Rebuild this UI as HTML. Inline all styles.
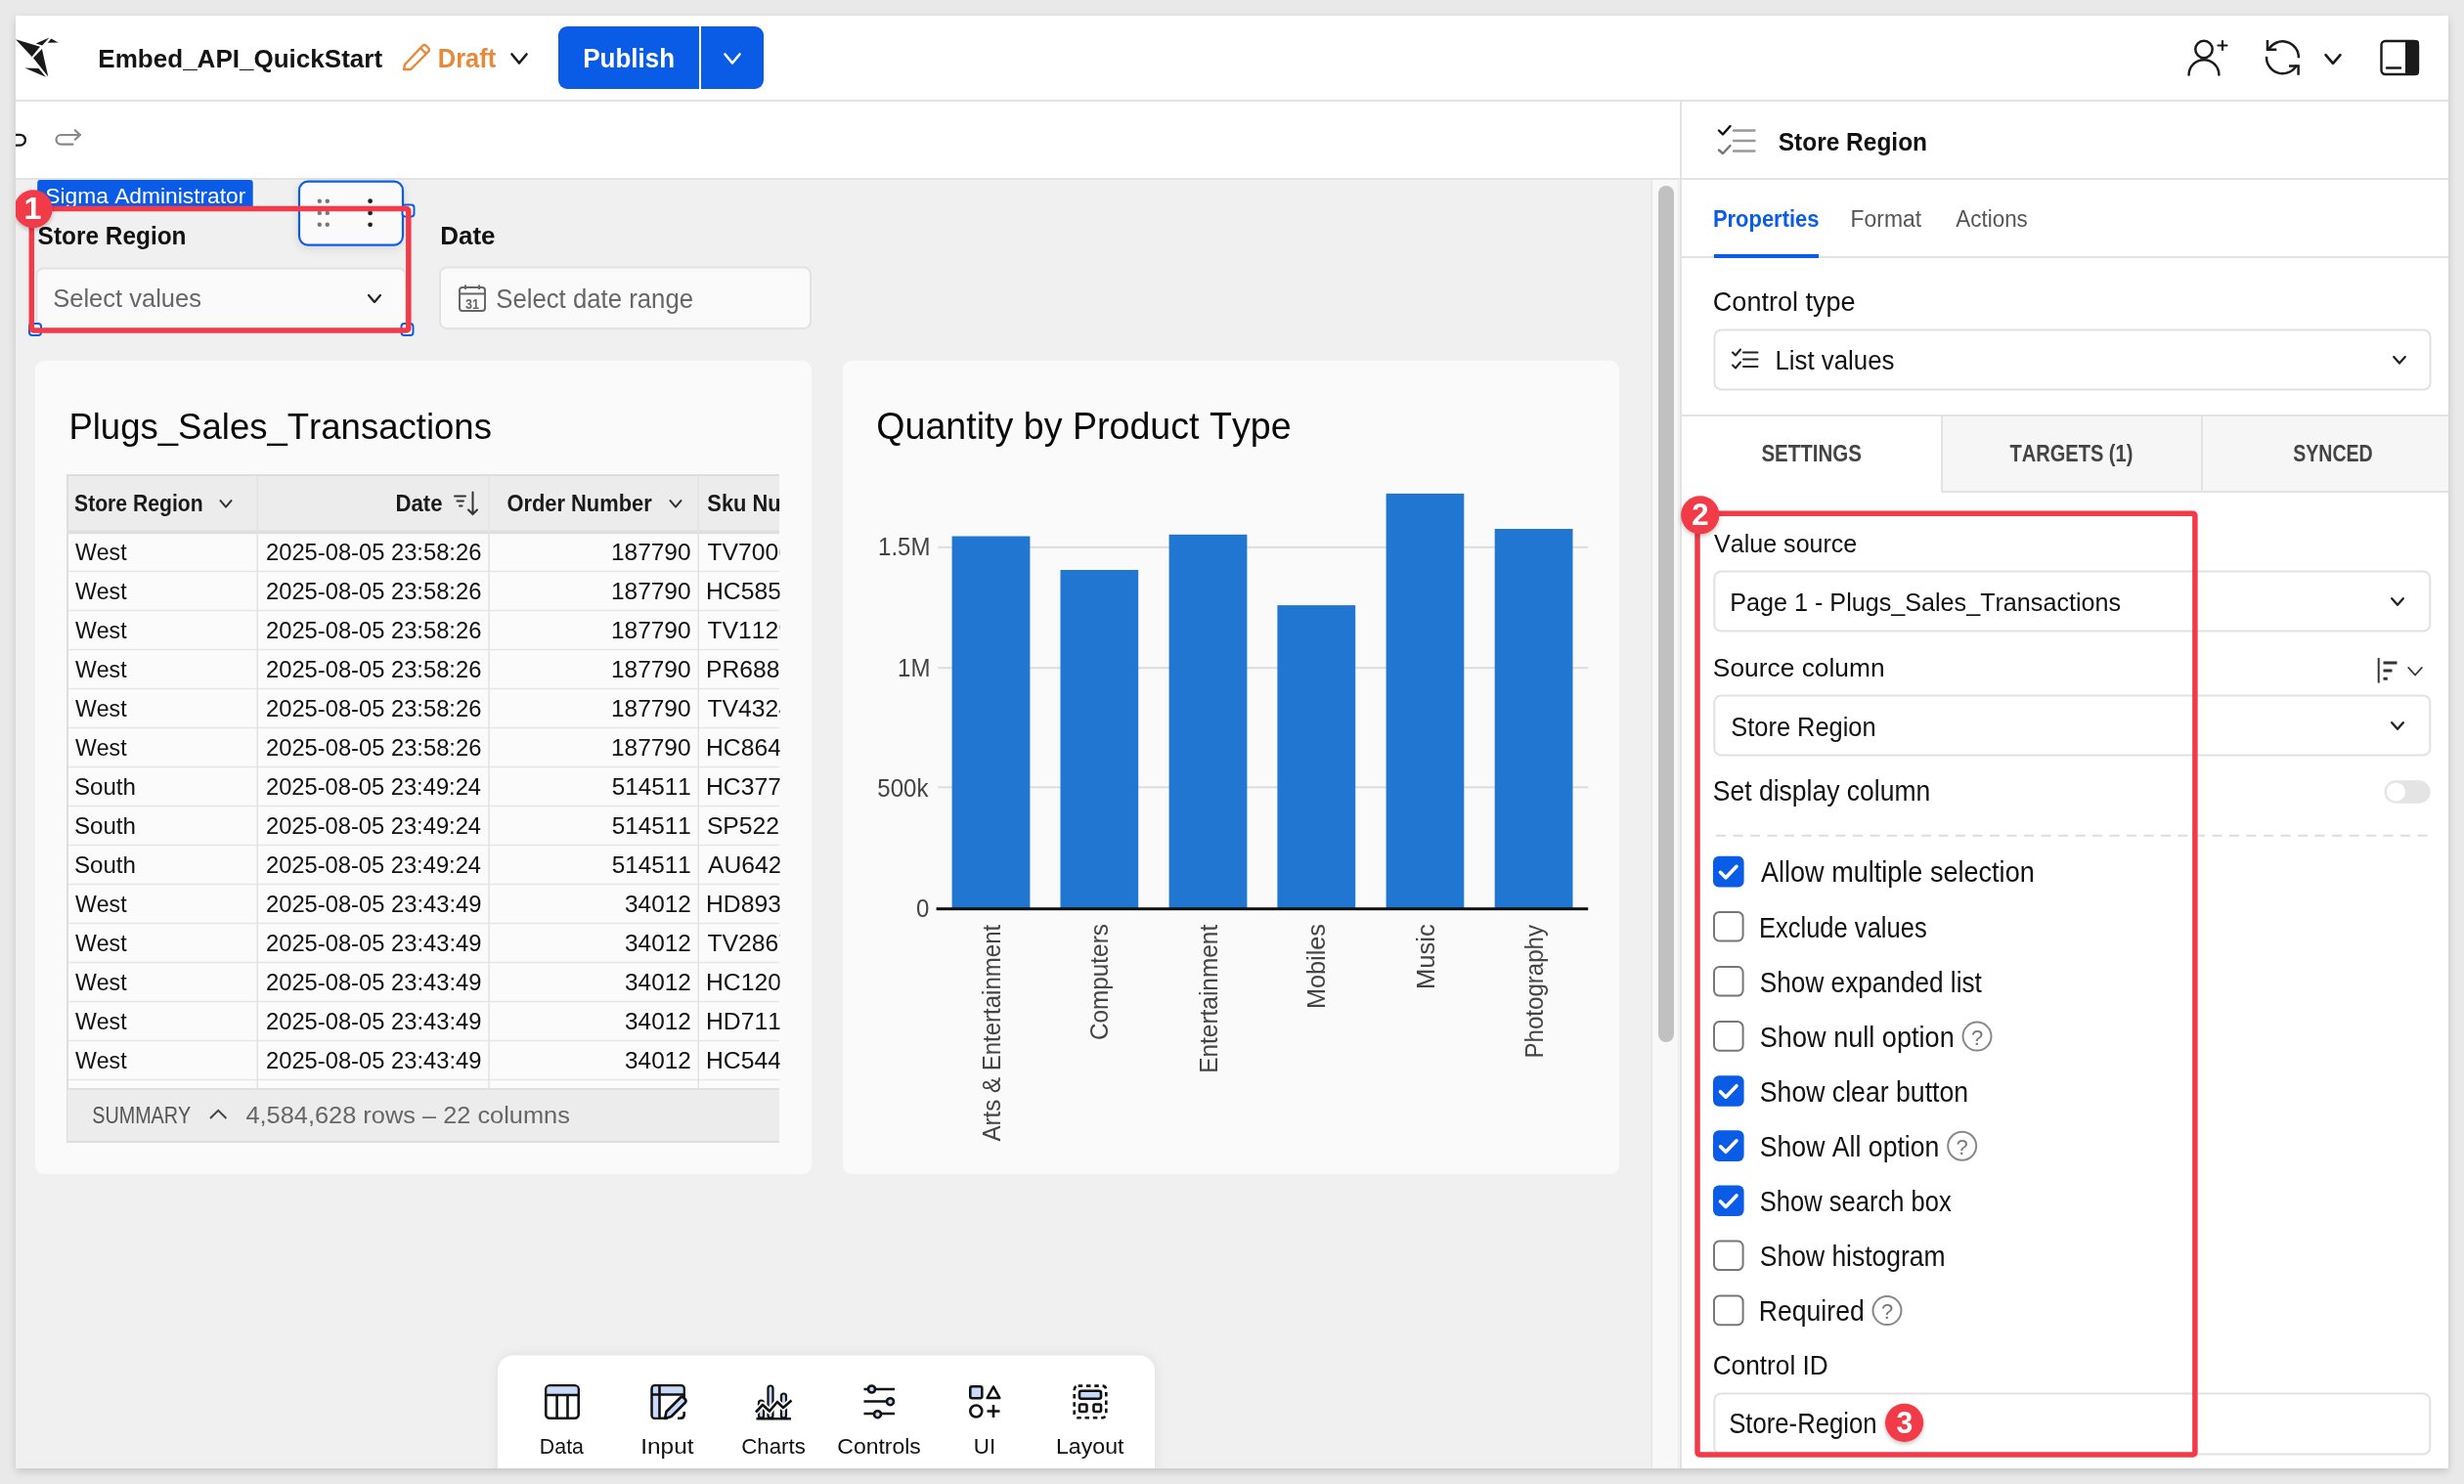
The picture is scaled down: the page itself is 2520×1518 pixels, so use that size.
<!DOCTYPE html><html><head><meta charset="utf-8"><style>html,body{margin:0;padding:0;background:#e9e9e9;overflow:hidden}</style></head><body><svg width="2520" height="1518" viewBox="0 0 2520 1518" style="display:block;font-family:'Liberation Sans',sans-serif;font-kerning:none;will-change:transform">
<defs>
<filter id="appsh" x="-5%" y="-5%" width="110%" height="110%"><feDropShadow dx="0" dy="3" stdDeviation="4" flood-color="#000" flood-opacity="0.16"/></filter>
<filter id="sh2" x="-20%" y="-20%" width="140%" height="160%"><feDropShadow dx="0" dy="3" stdDeviation="5" flood-color="#000" flood-opacity="0.10"/></filter>
<filter id="sh3" x="-10%" y="-30%" width="120%" height="160%"><feDropShadow dx="0" dy="0" stdDeviation="6" flood-color="#000" flood-opacity="0.08"/></filter>
<filter id="bsh" x="-30%" y="-30%" width="160%" height="160%"><feDropShadow dx="0" dy="2" stdDeviation="2" flood-color="#000" flood-opacity="0.25"/></filter>
<clipPath id="tblclip"><rect x="68" y="485" width="729" height="700"/></clipPath>
<clipPath id="appclip"><rect x="16" y="16" width="2488" height="1486"/></clipPath>
</defs>
<rect x="0" y="0" width="2520" height="1518" fill="#e9e9e9" />
<rect x="16" y="16" width="2488" height="1486" fill="#ffffff" filter="url(#appsh)"/>
<g clip-path="url(#appclip)">
<rect x="16" y="102" width="2488" height="2" fill="#e3e3e3" />
<rect x="16" y="182" width="2488" height="2" fill="#e3e3e3" />
<rect x="16" y="184" width="1674" height="1318" fill="#f0f0f0" />
<rect x="1690" y="184" width="28" height="1318" fill="#f8f8f8" />
<rect x="1696" y="190" width="16" height="876" fill="#c1c1c1" rx="8" />
<rect x="1718" y="104" width="2" height="1398" fill="#e3e3e3" />
<rect x="1716" y="184" width="1.5" height="1318" fill="#ececec" />
<rect x="1688.5" y="184" width="1.5" height="1318" fill="#e6e6e6" />
<g fill="#1a1a1a"><polygon points="16,40.2 41,47.7 32.6,58"/><polygon points="36.7,44.5 50.4,38.5 43.1,46.4"/><polygon points="48.8,43.7 52.3,39.6 59.6,43.4"/><polygon points="34,59.3 42.9,49.9 49.3,78.4"/><polygon points="25.3,69.5 39.6,70.1 46.9,78.7"/></g>
<text x="100.36" y="68.80" font-size="25.87" font-weight="bold" fill="#141414" textLength="290.76" lengthAdjust="spacingAndGlyphs" >Embed_API_QuickStart</text>
<g fill="none" stroke="#e8883a" stroke-width="2.4" stroke-linejoin="round"><path d="M414 66 L432 47 Q434 45 436 47 L438 49 Q440 51 438 53 L420 71 L413 71 Z"/><path d="M430 49 L436 55"/></g>
<text x="447.79" y="69.00" font-size="27.62" font-weight="bold" fill="#e8883a" textLength="59.52" lengthAdjust="spacingAndGlyphs" >Draft</text>
<path d="M523.5 55.5 L531.0 64.5 L538.5 55.5" fill="none" stroke="#1a1a1a" stroke-width="2.6" stroke-linecap="round" stroke-linejoin="round"/>
<rect x="571" y="27" width="210" height="64" fill="#0a5ce6" rx="9" />
<rect x="715" y="27" width="2" height="64" fill="#ffffff" />
<text x="596.26" y="69.00" font-size="27.62" font-weight="bold" fill="#ffffff" textLength="93.85" lengthAdjust="spacingAndGlyphs" >Publish</text>
<path d="M741.5 55.5 L749.0 64.5 L756.5 55.5" fill="none" stroke="#ffffff" stroke-width="2.6" stroke-linecap="round" stroke-linejoin="round"/>
<g fill="none" stroke="#1a1a1a" stroke-width="2.5" stroke-linecap="round"><circle cx="2254" cy="50.5" r="8.7"/><path d="M2238.6 76.5 A15.4 15.4 0 0 1 2269.4 76.5"/><path d="M2273 42 V51 M2268.5 46.5 H2277.5" stroke-width="2.2"/></g>
<g fill="none" stroke="#1a1a1a" stroke-width="2.5"><path d="M2350.90 59.30 A16.4 16.4 0 0 0 2320.02 51.10"/><path d="M2318.10 57.80 A16.4 16.4 0 0 0 2348.98 66.50"/><path d="M2319 41 V50.7 H2328.3 M2341 67.4 H2350.6 V76.7" stroke-linecap="butt"/></g>
<path d="M2378.5 56.2 L2386.0 64.8 L2393.5 56.2" fill="none" stroke="#1a1a1a" stroke-width="2.6" stroke-linecap="round" stroke-linejoin="round"/>
<rect x="2435.5" y="42" width="37.5" height="34" rx="4" fill="none" stroke="#1a1a1a" stroke-width="2.4"/><rect x="2460" y="41" width="14" height="36" rx="3" fill="#1a1a1a"/><path d="M2441 69.5 H2455" stroke="#1a1a1a" stroke-width="2.4" stroke-linecap="round"/>
<path d="M15 137.8 H20.5 A5.4 5.4 0 0 1 20.5 148.6 H15" fill="none" stroke="#1a1a1a" stroke-width="2.3"/>
<g fill="none" stroke="#888" stroke-width="2.2" stroke-linecap="round" stroke-linejoin="round"><path d="M82 138 H62.3 A4.8 4.8 0 0 0 62.3 147.6 H74.5"/><path d="M76.8 133.2 L81.8 138 L76.8 142.8"/></g>
<rect x="37.5" y="274.5" width="377.5" height="62" fill="#fafafa" rx="7" stroke="#e2e2e2" stroke-width="2" />
<text x="38.60" y="249.50" font-size="26.16" font-weight="bold" fill="#111" textLength="151.92" lengthAdjust="spacingAndGlyphs" >Store Region</text>
<text x="54.24" y="313.90" font-size="26.16" font-weight="normal" fill="#666" textLength="151.68" lengthAdjust="spacingAndGlyphs" >Select values</text>
<path d="M377.0 302.0 L383.0 309.0 L389.0 302.0" fill="none" stroke="#222" stroke-width="2.2" stroke-linecap="round" stroke-linejoin="round"/>
<rect x="450" y="273.6" width="379" height="62.5" fill="#fafafa" rx="7" stroke="#e2e2e2" stroke-width="2" />
<text x="450.26" y="250.00" font-size="26.16" font-weight="bold" fill="#111" textLength="56.33" lengthAdjust="spacingAndGlyphs" >Date</text>
<g fill="none" stroke="#666" stroke-width="2"><rect x="470" y="294" width="26" height="24" rx="3"/><path d="M470 300.5 H496 M476 291.5 V296 M490 291.5 V296"/></g>
<text x="476" y="316" font-size="14" font-weight="bold" fill="#666" textLength="14" lengthAdjust="spacingAndGlyphs">31</text>
<text x="507.23" y="314.80" font-size="26.89" font-weight="normal" fill="#666" textLength="201.81" lengthAdjust="spacingAndGlyphs" >Select date range</text>
<rect x="36" y="369" width="794" height="832" fill="#fafafa" rx="9" />
<text x="70.40" y="448.80" font-size="37.79" font-weight="normal" fill="#0a0a0a" textLength="432.52" lengthAdjust="spacingAndGlyphs" >Plugs_Sales_Transactions</text>
<g clip-path="url(#tblclip)">
<rect x="69" y="486" width="728" height="57" fill="#ececec" />
<rect x="69" y="542.5" width="728" height="4" fill="#dedede" />
<rect x="69" y="546.5" width="728" height="567" fill="#fbfbfb" />
<rect x="69" y="583.75" width="728" height="1.5" fill="#e6e6e6" />
<rect x="69" y="623.75" width="728" height="1.5" fill="#e6e6e6" />
<rect x="69" y="663.75" width="728" height="1.5" fill="#e6e6e6" />
<rect x="69" y="703.75" width="728" height="1.5" fill="#e6e6e6" />
<rect x="69" y="743.75" width="728" height="1.5" fill="#e6e6e6" />
<rect x="69" y="783.75" width="728" height="1.5" fill="#e6e6e6" />
<rect x="69" y="823.75" width="728" height="1.5" fill="#e6e6e6" />
<rect x="69" y="863.75" width="728" height="1.5" fill="#e6e6e6" />
<rect x="69" y="903.75" width="728" height="1.5" fill="#e6e6e6" />
<rect x="69" y="943.75" width="728" height="1.5" fill="#e6e6e6" />
<rect x="69" y="983.75" width="728" height="1.5" fill="#e6e6e6" />
<rect x="69" y="1023.75" width="728" height="1.5" fill="#e6e6e6" />
<rect x="69" y="1063.75" width="728" height="1.5" fill="#e6e6e6" />
<rect x="69" y="1103.75" width="728" height="1.5" fill="#e6e6e6" />
<rect x="262.45" y="486" width="1.5" height="628" fill="#e2e2e2" />
<rect x="499.25" y="486" width="1.5" height="628" fill="#e2e2e2" />
<rect x="713.55" y="486" width="1.5" height="628" fill="#e2e2e2" />
</g>
<rect x="68" y="485" width="729" height="2" fill="#dedede" />
<rect x="68" y="485" width="2" height="684" fill="#dedede" />
<rect x="69" y="1113" width="728" height="55" fill="#ececec" />
<rect x="68" y="1167" width="729" height="2" fill="#dedede" />
<rect x="69" y="1113" width="728" height="2" fill="#e0e0e0" />
<text x="76.09" y="522.80" font-size="23.26" font-weight="bold" fill="#1a1a1a" textLength="131.52" lengthAdjust="spacingAndGlyphs" >Store Region</text>
<path d="M225.5 512.1 L231.0 518.6 L236.5 512.1" fill="none" stroke="#333" stroke-width="2" stroke-linecap="round" stroke-linejoin="round"/>
<text x="404.52" y="522.80" font-size="23.26" font-weight="bold" fill="#1a1a1a" textLength="48.04" lengthAdjust="spacingAndGlyphs" >Date</text>
<g fill="none" stroke="#333" stroke-width="2" stroke-linecap="round"><path d="M465 507.5 H476 M467.5 512.5 H474 M470 517.5 H472.5"/><path d="M483.5 503.5 V526 M479 521.5 L483.5 526 L488 521.5"/></g>
<text x="518.40" y="523.00" font-size="23.26" font-weight="bold" fill="#1a1a1a" textLength="148.33" lengthAdjust="spacingAndGlyphs" >Order Number</text>
<path d="M685.5 512.1 L691.0 518.6 L696.5 512.1" fill="none" stroke="#333" stroke-width="2" stroke-linecap="round" stroke-linejoin="round"/>
<svg x="700" y="486" width="97.6" height="60" overflow="hidden">
<g transform="translate(-700,-486)">
<text x="723.37" y="523.00" font-size="23.26" font-weight="bold" fill="#1a1a1a" textLength="128.87" lengthAdjust="spacingAndGlyphs">Sku Number</text>
</g></svg>
<svg x="700" y="546" width="97.6" height="566" overflow="hidden"><g transform="translate(-700,-546)">
<text x="723.45" y="572.70" font-size="24.71" font-weight="normal" fill="#111" textLength="86.54" lengthAdjust="spacingAndGlyphs" transform="translate(0,0)">TV7006</text>
<text x="721.97" y="612.70" font-size="24.71" font-weight="normal" fill="#111" textLength="90.66" lengthAdjust="spacingAndGlyphs" transform="translate(0,0)">HC5855</text>
<text x="723.45" y="652.70" font-size="24.71" font-weight="normal" fill="#111" textLength="86.54" lengthAdjust="spacingAndGlyphs" transform="translate(0,0)">TV1129</text>
<text x="721.97" y="692.70" font-size="24.71" font-weight="normal" fill="#111" textLength="89.29" lengthAdjust="spacingAndGlyphs" transform="translate(0,0)">PR6885</text>
<text x="723.45" y="732.70" font-size="24.71" font-weight="normal" fill="#111" textLength="86.54" lengthAdjust="spacingAndGlyphs" transform="translate(0,0)">TV4324</text>
<text x="721.97" y="772.70" font-size="24.71" font-weight="normal" fill="#111" textLength="90.66" lengthAdjust="spacingAndGlyphs" transform="translate(0,0)">HC8644</text>
<text x="721.97" y="812.70" font-size="24.71" font-weight="normal" fill="#111" textLength="90.66" lengthAdjust="spacingAndGlyphs" transform="translate(0,0)">HC3777</text>
<text x="722.88" y="852.70" font-size="24.71" font-weight="normal" fill="#111" textLength="87.93" lengthAdjust="spacingAndGlyphs" transform="translate(0,0)">SP5221</text>
<text x="723.95" y="892.70" font-size="24.71" font-weight="normal" fill="#111" textLength="89.29" lengthAdjust="spacingAndGlyphs" transform="translate(0,0)">AU6427</text>
<text x="721.97" y="932.70" font-size="24.71" font-weight="normal" fill="#111" textLength="90.66" lengthAdjust="spacingAndGlyphs" transform="translate(0,0)">HD8931</text>
<text x="723.45" y="972.70" font-size="24.71" font-weight="normal" fill="#111" textLength="86.54" lengthAdjust="spacingAndGlyphs" transform="translate(0,0)">TV2867</text>
<text x="721.97" y="1012.70" font-size="24.71" font-weight="normal" fill="#111" textLength="90.66" lengthAdjust="spacingAndGlyphs" transform="translate(0,0)">HC1201</text>
<text x="721.97" y="1052.70" font-size="24.71" font-weight="normal" fill="#111" textLength="90.66" lengthAdjust="spacingAndGlyphs" transform="translate(0,0)">HD7111</text>
<text x="721.97" y="1092.70" font-size="24.71" font-weight="normal" fill="#111" textLength="90.66" lengthAdjust="spacingAndGlyphs" transform="translate(0,0)">HC5444</text>
</g></svg>
<text x="76.90" y="572.70" font-size="24.71" font-weight="normal" fill="#111" textLength="52.67" lengthAdjust="spacingAndGlyphs" >West</text>
<text x="272.01" y="572.70" font-size="24.71" font-weight="normal" fill="#111" textLength="220.34" lengthAdjust="spacingAndGlyphs" >2025-08-05 23:58:26</text>
<text x="624.94" y="572.70" font-size="24.71" font-weight="normal" fill="#111" textLength="81.62" lengthAdjust="spacingAndGlyphs" >187790</text>
<text x="76.90" y="612.70" font-size="24.71" font-weight="normal" fill="#111" textLength="52.67" lengthAdjust="spacingAndGlyphs" >West</text>
<text x="272.01" y="612.70" font-size="24.71" font-weight="normal" fill="#111" textLength="220.34" lengthAdjust="spacingAndGlyphs" >2025-08-05 23:58:26</text>
<text x="624.94" y="612.70" font-size="24.71" font-weight="normal" fill="#111" textLength="81.62" lengthAdjust="spacingAndGlyphs" >187790</text>
<text x="76.90" y="652.70" font-size="24.71" font-weight="normal" fill="#111" textLength="52.67" lengthAdjust="spacingAndGlyphs" >West</text>
<text x="272.01" y="652.70" font-size="24.71" font-weight="normal" fill="#111" textLength="220.34" lengthAdjust="spacingAndGlyphs" >2025-08-05 23:58:26</text>
<text x="624.94" y="652.70" font-size="24.71" font-weight="normal" fill="#111" textLength="81.62" lengthAdjust="spacingAndGlyphs" >187790</text>
<text x="76.90" y="692.70" font-size="24.71" font-weight="normal" fill="#111" textLength="52.67" lengthAdjust="spacingAndGlyphs" >West</text>
<text x="272.01" y="692.70" font-size="24.71" font-weight="normal" fill="#111" textLength="220.34" lengthAdjust="spacingAndGlyphs" >2025-08-05 23:58:26</text>
<text x="624.94" y="692.70" font-size="24.71" font-weight="normal" fill="#111" textLength="81.62" lengthAdjust="spacingAndGlyphs" >187790</text>
<text x="76.90" y="732.70" font-size="24.71" font-weight="normal" fill="#111" textLength="52.67" lengthAdjust="spacingAndGlyphs" >West</text>
<text x="272.01" y="732.70" font-size="24.71" font-weight="normal" fill="#111" textLength="220.34" lengthAdjust="spacingAndGlyphs" >2025-08-05 23:58:26</text>
<text x="624.94" y="732.70" font-size="24.71" font-weight="normal" fill="#111" textLength="81.62" lengthAdjust="spacingAndGlyphs" >187790</text>
<text x="76.90" y="772.70" font-size="24.71" font-weight="normal" fill="#111" textLength="52.67" lengthAdjust="spacingAndGlyphs" >West</text>
<text x="272.01" y="772.70" font-size="24.71" font-weight="normal" fill="#111" textLength="220.34" lengthAdjust="spacingAndGlyphs" >2025-08-05 23:58:26</text>
<text x="624.94" y="772.70" font-size="24.71" font-weight="normal" fill="#111" textLength="81.62" lengthAdjust="spacingAndGlyphs" >187790</text>
<text x="75.90" y="812.70" font-size="24.71" font-weight="normal" fill="#111" textLength="63.06" lengthAdjust="spacingAndGlyphs" >South</text>
<text x="272.01" y="812.70" font-size="24.71" font-weight="normal" fill="#111" textLength="219.99" lengthAdjust="spacingAndGlyphs" >2025-08-05 23:49:24</text>
<text x="625.73" y="812.70" font-size="24.71" font-weight="normal" fill="#111" textLength="81.06" lengthAdjust="spacingAndGlyphs" >514511</text>
<text x="75.90" y="852.70" font-size="24.71" font-weight="normal" fill="#111" textLength="63.06" lengthAdjust="spacingAndGlyphs" >South</text>
<text x="272.01" y="852.70" font-size="24.71" font-weight="normal" fill="#111" textLength="219.99" lengthAdjust="spacingAndGlyphs" >2025-08-05 23:49:24</text>
<text x="625.73" y="852.70" font-size="24.71" font-weight="normal" fill="#111" textLength="81.06" lengthAdjust="spacingAndGlyphs" >514511</text>
<text x="75.90" y="892.70" font-size="24.71" font-weight="normal" fill="#111" textLength="63.06" lengthAdjust="spacingAndGlyphs" >South</text>
<text x="272.01" y="892.70" font-size="24.71" font-weight="normal" fill="#111" textLength="219.99" lengthAdjust="spacingAndGlyphs" >2025-08-05 23:49:24</text>
<text x="625.73" y="892.70" font-size="24.71" font-weight="normal" fill="#111" textLength="81.06" lengthAdjust="spacingAndGlyphs" >514511</text>
<text x="76.90" y="932.70" font-size="24.71" font-weight="normal" fill="#111" textLength="52.67" lengthAdjust="spacingAndGlyphs" >West</text>
<text x="272.01" y="932.70" font-size="24.71" font-weight="normal" fill="#111" textLength="220.42" lengthAdjust="spacingAndGlyphs" >2025-08-05 23:43:49</text>
<text x="639.07" y="932.70" font-size="24.71" font-weight="normal" fill="#111" textLength="67.75" lengthAdjust="spacingAndGlyphs" >34012</text>
<text x="76.90" y="972.70" font-size="24.71" font-weight="normal" fill="#111" textLength="52.67" lengthAdjust="spacingAndGlyphs" >West</text>
<text x="272.01" y="972.70" font-size="24.71" font-weight="normal" fill="#111" textLength="220.42" lengthAdjust="spacingAndGlyphs" >2025-08-05 23:43:49</text>
<text x="639.07" y="972.70" font-size="24.71" font-weight="normal" fill="#111" textLength="67.75" lengthAdjust="spacingAndGlyphs" >34012</text>
<text x="76.90" y="1012.70" font-size="24.71" font-weight="normal" fill="#111" textLength="52.67" lengthAdjust="spacingAndGlyphs" >West</text>
<text x="272.01" y="1012.70" font-size="24.71" font-weight="normal" fill="#111" textLength="220.42" lengthAdjust="spacingAndGlyphs" >2025-08-05 23:43:49</text>
<text x="639.07" y="1012.70" font-size="24.71" font-weight="normal" fill="#111" textLength="67.75" lengthAdjust="spacingAndGlyphs" >34012</text>
<text x="76.90" y="1052.70" font-size="24.71" font-weight="normal" fill="#111" textLength="52.67" lengthAdjust="spacingAndGlyphs" >West</text>
<text x="272.01" y="1052.70" font-size="24.71" font-weight="normal" fill="#111" textLength="220.42" lengthAdjust="spacingAndGlyphs" >2025-08-05 23:43:49</text>
<text x="639.07" y="1052.70" font-size="24.71" font-weight="normal" fill="#111" textLength="67.75" lengthAdjust="spacingAndGlyphs" >34012</text>
<text x="76.90" y="1092.70" font-size="24.71" font-weight="normal" fill="#111" textLength="52.67" lengthAdjust="spacingAndGlyphs" >West</text>
<text x="272.01" y="1092.70" font-size="24.71" font-weight="normal" fill="#111" textLength="220.42" lengthAdjust="spacingAndGlyphs" >2025-08-05 23:43:49</text>
<text x="639.07" y="1092.70" font-size="24.71" font-weight="normal" fill="#111" textLength="67.75" lengthAdjust="spacingAndGlyphs" >34012</text>
<text x="94.30" y="1149.00" font-size="23.26" font-weight="normal" fill="#555" textLength="100.93" lengthAdjust="spacingAndGlyphs" >SUMMARY</text>
<path d="M215 1144 L223.2 1135.8 L231.4 1144" fill="none" stroke="#444" stroke-width="2"/>
<text x="251.42" y="1149.00" font-size="23.98" font-weight="normal" fill="#666" textLength="331.50" lengthAdjust="spacingAndGlyphs" >4,584,628 rows – 22 columns</text>
<rect x="862" y="369" width="794" height="832" fill="#fafafa" rx="9" />
<text x="896.22" y="448.90" font-size="38.08" font-weight="normal" fill="#0a0a0a" textLength="424.35" lengthAdjust="spacingAndGlyphs" >Quantity by Product Type</text>
<rect x="959.3" y="558.8" width="665" height="2" fill="#dddddd" />
<rect x="959.3" y="682.2" width="665" height="2" fill="#dddddd" />
<rect x="959.3" y="804.3" width="665" height="2" fill="#dddddd" />
<rect x="973.6" y="548.5" width="79.80000000000007" height="381.0" fill="#2176d2" />
<rect x="1084.5" y="583" width="79.70000000000005" height="346.5" fill="#2176d2" />
<rect x="1195.6" y="546.8" width="79.80000000000018" height="382.70000000000005" fill="#2176d2" />
<rect x="1306.4" y="619.1" width="79.79999999999995" height="310.4" fill="#2176d2" />
<rect x="1417.6" y="504.9" width="79.70000000000005" height="424.6" fill="#2176d2" />
<rect x="1528.7" y="541" width="79.79999999999995" height="388.5" fill="#2176d2" />
<rect x="957.6" y="928.2" width="666.6" height="3" fill="#111" />
<text x="898.06" y="568.20" font-size="25.29" font-weight="normal" fill="#444" textLength="53.41" lengthAdjust="spacingAndGlyphs">1.5M</text>
<text x="918.09" y="691.60" font-size="25.29" font-weight="normal" fill="#444" textLength="33.38" lengthAdjust="spacingAndGlyphs">1M</text>
<text x="897.37" y="814.80" font-size="25.29" font-weight="normal" fill="#444" textLength="52.10" lengthAdjust="spacingAndGlyphs">500k</text>
<text x="937.08" y="938.10" font-size="25.29" font-weight="normal" fill="#444" textLength="13.36" lengthAdjust="spacingAndGlyphs">0</text>
<g transform="translate(1022.60,1167.40) rotate(-90)">
<text x="-0.05" y="0.00" font-size="25.29" font-weight="normal" fill="#444" textLength="221.62" lengthAdjust="spacingAndGlyphs" >Arts &amp; Entertainment</text>
</g>
<g transform="translate(1133.45,1062.80) rotate(-90)">
<text x="-1.23" y="0.00" font-size="25.29" font-weight="normal" fill="#444" textLength="118.91" lengthAdjust="spacingAndGlyphs" >Computers</text>
</g>
<g transform="translate(1244.60,1095.80) rotate(-90)">
<text x="-2.00" y="0.00" font-size="25.29" font-weight="normal" fill="#444" textLength="151.98" lengthAdjust="spacingAndGlyphs" >Entertainment</text>
</g>
<g transform="translate(1355.40,1030.00) rotate(-90)">
<text x="-2.07" y="0.00" font-size="25.29" font-weight="normal" fill="#444" textLength="86.98" lengthAdjust="spacingAndGlyphs" >Mobiles</text>
</g>
<g transform="translate(1466.55,1009.90) rotate(-90)">
<text x="-2.09" y="0.00" font-size="25.29" font-weight="normal" fill="#444" textLength="66.67" lengthAdjust="spacingAndGlyphs" >Music</text>
</g>
<g transform="translate(1577.70,1080.50) rotate(-90)">
<text x="-1.97" y="0.00" font-size="25.29" font-weight="normal" fill="#444" textLength="136.52" lengthAdjust="spacingAndGlyphs" >Photography</text>
</g>
<rect x="509" y="1386.6" width="672" height="140" rx="16" fill="#ffffff" filter="url(#sh3)"/>
<g stroke="#111" stroke-width="2.6" fill="none" stroke-linejoin="round"><rect x="558.3" y="1417.3" width="33.4" height="33.4" rx="4" fill="#fff"/><rect x="559.6" y="1418.6" width="30.8" height="8" fill="#c8dafa" stroke="none"/><path d="M558.3 1427 H591.7 M569.6 1427 V1450.7 M580.5 1427 V1450.7"/><path d="M683 1450.7 H670 Q666.6 1450.7 666.6 1447 V1421 Q666.6 1417.3 670 1417.3 H696 Q699.7 1417.3 699.7 1421 V1430"/><rect x="667.9" y="1418.6" width="30.5" height="7" fill="#c8dafa" stroke="none"/><rect x="667.9" y="1426" width="6" height="23.5" fill="#c8dafa" stroke="none"/><path d="M666.6 1426.5 H699.7 M674.5 1417.3 V1450.7"/><path d="M699.7 1444 V1447 Q699.7 1450.7 696 1450.7 H693"/><path d="M680 1451 L681.5 1444 L695.5 1430 Q697.5 1428 699.5 1430 L700.5 1431 Q702.5 1433 700.5 1435 L686.5 1449 Z" fill="#c8dafa"/><path d="M773.5 1451.3 H809"/><rect x="785.5" y="1417.5" width="5" height="33" rx="2.5" fill="#c8dafa" stroke-width="2.2"/><rect x="776" y="1432.5" width="5" height="18" rx="2.5" fill="#c8dafa" stroke-width="2.2"/><rect x="799" y="1425.5" width="5" height="25" rx="2.5" fill="#c8dafa" stroke-width="2.2"/><path d="M773 1444.5 L780 1437 L787 1443.5 L795 1434 L801 1440 L809.5 1432.5" stroke="#fff" stroke-width="6"/><path d="M773 1444.5 L780 1437 L787 1443.5 L795 1434 L801 1440 L809.5 1432.5"/><path d="M883.5 1421 H915 M883.5 1433.5 H915 M883.5 1446 H915"/><circle cx="891.5" cy="1421" r="3.5" fill="#c8dafa"/><circle cx="910.5" cy="1433.7" r="3.5" fill="#c8dafa"/><circle cx="897.5" cy="1446.7" r="3.5" fill="#c8dafa"/><rect x="992.3" y="1418.2" width="12" height="12" rx="2" fill="#c8dafa"/><path d="M1016 1418.5 L1022.3 1430 H1009.7 Z"/><circle cx="998.3" cy="1443.5" r="6"/><path d="M1016 1437 V1450 M1009.5 1443.5 H1022.5"/><rect x="1098.7" y="1417.6" width="32.6" height="32.6" rx="4" stroke-dasharray="4.5 3.8"/><rect x="1104" y="1422.7" width="22" height="8" rx="2" fill="#c8dafa"/><rect x="1104" y="1436.5" width="7.5" height="7.5" rx="1.5"/><rect x="1118.5" y="1436.5" width="7.5" height="7.5" rx="1.5"/></g>
<text x="551.85" y="1486.90" font-size="22.38" font-weight="normal" fill="#111" textLength="45.15" lengthAdjust="spacingAndGlyphs" >Data</text>
<text x="655.25" y="1486.90" font-size="22.38" font-weight="normal" fill="#111" textLength="54.33" lengthAdjust="spacingAndGlyphs" >Input</text>
<text x="758.27" y="1486.90" font-size="22.38" font-weight="normal" fill="#111" textLength="65.53" lengthAdjust="spacingAndGlyphs" >Charts</text>
<text x="856.33" y="1486.90" font-size="22.38" font-weight="normal" fill="#111" textLength="85.50" lengthAdjust="spacingAndGlyphs" >Controls</text>
<text x="995.77" y="1486.90" font-size="22.38" font-weight="normal" fill="#111" textLength="22.39" lengthAdjust="spacingAndGlyphs" >UI</text>
<text x="1080.00" y="1486.90" font-size="22.38" font-weight="normal" fill="#111" textLength="69.42" lengthAdjust="spacingAndGlyphs" >Layout</text>
<g fill="none" stroke-width="2.4" stroke-linecap="round" stroke-linejoin="round"><path d="M1758 133.5 L1762 137.5 L1769.5 129" stroke="#111"/><path d="M1758 153.5 L1762 157 L1769.5 149" stroke="#777"/><path d="M1773 133.5 H1794.5 M1773 144 H1794.5 M1773 154.5 H1794.5" stroke="#999"/></g>
<text x="1818.80" y="153.60" font-size="26.16" font-weight="bold" fill="#111" textLength="152.22" lengthAdjust="spacingAndGlyphs" >Store Region</text>
<text x="1751.93" y="232.00" font-size="23.98" font-weight="bold" fill="#0a5ce6" textLength="108.57" lengthAdjust="spacingAndGlyphs" >Properties</text>
<text x="1892.62" y="232.00" font-size="23.98" font-weight="normal" fill="#555" textLength="72.55" lengthAdjust="spacingAndGlyphs" >Format</text>
<text x="2000.36" y="232.00" font-size="23.98" font-weight="normal" fill="#555" textLength="73.45" lengthAdjust="spacingAndGlyphs" >Actions</text>
<rect x="1720" y="262" width="784" height="2" fill="#e3e3e3" />
<rect x="1753" y="260" width="107" height="4" fill="#0a5ce6" />
<text x="1751.83" y="317.90" font-size="26.74" font-weight="normal" fill="#111" textLength="145.77" lengthAdjust="spacingAndGlyphs" >Control type</text>
<rect x="1753.5" y="337.5" width="732" height="61" fill="#ffffff" rx="7" stroke="#e2e2e2" stroke-width="2" />
<g fill="none" stroke="#222" stroke-width="2" stroke-linecap="round" stroke-linejoin="round"><path d="M1772 360.5 L1775 363.5 L1780 357.5 M1772 373.5 L1775 376.5 L1780 370.5"/><path d="M1783 360.5 H1797.5 M1783 367.5 H1797.5 M1783 375 H1797.5"/></g>
<text x="1815.38" y="378.00" font-size="27.18" font-weight="normal" fill="#111" textLength="122.16" lengthAdjust="spacingAndGlyphs" >List values</text>
<path d="M2448.2 365.1 L2454.0 371.6 L2459.8 365.1" fill="none" stroke="#222" stroke-width="2.3" stroke-linecap="round" stroke-linejoin="round"/>
<rect x="1720" y="424" width="784" height="2" fill="#e3e3e3" />
<rect x="1986" y="426" width="518" height="76" fill="#f6f6f6" />
<rect x="1985" y="426" width="2" height="77" fill="#e3e3e3" />
<rect x="2251" y="426" width="2" height="77" fill="#e3e3e3" />
<rect x="1986" y="502" width="518" height="2" fill="#e3e3e3" />
<text x="1801.41" y="471.80" font-size="23.40" font-weight="bold" fill="#444" textLength="102.59" lengthAdjust="spacingAndGlyphs" >SETTINGS</text>
<text x="2055.47" y="471.80" font-size="23.40" font-weight="bold" fill="#444" textLength="125.92" lengthAdjust="spacingAndGlyphs" >TARGETS (1)</text>
<text x="2345.14" y="472.00" font-size="23.40" font-weight="bold" fill="#444" textLength="81.59" lengthAdjust="spacingAndGlyphs" >SYNCED</text>
<text x="1753.09" y="565.20" font-size="26.02" font-weight="normal" fill="#111" textLength="146.22" lengthAdjust="spacingAndGlyphs" >Value source</text>
<rect x="1753.3" y="584.5" width="732" height="61" fill="#ffffff" rx="7" stroke="#e2e2e2" stroke-width="2" />
<text x="1769.34" y="624.60" font-size="26.60" font-weight="normal" fill="#111" textLength="399.77" lengthAdjust="spacingAndGlyphs" >Page 1 - Plugs_Sales_Transactions</text>
<path d="M2446.2 612.2 L2452.0 618.8 L2457.8 612.2" fill="none" stroke="#222" stroke-width="2.3" stroke-linecap="round" stroke-linejoin="round"/>
<text x="1751.80" y="692.00" font-size="26.02" font-weight="normal" fill="#111" textLength="175.81" lengthAdjust="spacingAndGlyphs" >Source column</text>
<g fill="none" stroke="#333" stroke-width="2"><path d="M2432.7 673 V698.6"/></g><g fill="none" stroke="#333" stroke-width="3"><path d="M2437.5 678 H2451.5 M2437.5 686 H2446.5 M2437.5 694.2 H2441.8"/></g>
<path d="M2463.2 683.0 L2470.0 690.5 L2476.8 683.0" fill="none" stroke="#333" stroke-width="1.8" stroke-linecap="round" stroke-linejoin="round"/>
<rect x="1753.3" y="711.5" width="732" height="61" fill="#ffffff" rx="7" stroke="#e2e2e2" stroke-width="2" />
<text x="1770.25" y="752.90" font-size="28.34" font-weight="normal" fill="#111" textLength="148.41" lengthAdjust="spacingAndGlyphs" >Store Region</text>
<path d="M2446.2 739.2 L2452.0 745.8 L2457.8 739.2" fill="none" stroke="#222" stroke-width="2.3" stroke-linecap="round" stroke-linejoin="round"/>
<text x="1751.80" y="819.40" font-size="28.78" font-weight="normal" fill="#111" textLength="222.42" lengthAdjust="spacingAndGlyphs" >Set display column</text>
<rect x="2438.6" y="798.2" width="47" height="23.5" rx="11.75" fill="#e4e4e4"/><circle cx="2450.4" cy="810" r="9.6" fill="#fff"/>
<path d="M1755 854.7 H2485.3" stroke="#dddddd" stroke-width="2" stroke-dasharray="10 7.5"/>
<rect x="1752" y="875.8" width="31.6" height="31.6" rx="6" fill="#0a5ce6"/><path d="M1759.5 892.3 L1765 897.8 L1776 886.3" fill="none" stroke="#fff" stroke-width="3.6" stroke-linecap="round" stroke-linejoin="round"/>
<text x="1800.95" y="902.40" font-size="28.78" font-weight="normal" fill="#111" textLength="279.81" lengthAdjust="spacingAndGlyphs" >Allow multiple selection</text>
<rect x="1753" y="932.9" width="29.6" height="29.6" rx="5.5" fill="#fff" stroke="#777" stroke-width="2"/>
<text x="1798.90" y="958.50" font-size="28.78" font-weight="normal" fill="#111" textLength="171.82" lengthAdjust="spacingAndGlyphs" >Exclude values</text>
<rect x="1753" y="989.0" width="29.6" height="29.6" rx="5.5" fill="#fff" stroke="#777" stroke-width="2"/>
<text x="1799.81" y="1014.60" font-size="28.78" font-weight="normal" fill="#111" textLength="227.08" lengthAdjust="spacingAndGlyphs" >Show expanded list</text>
<rect x="1753" y="1045.1" width="29.6" height="29.6" rx="5.5" fill="#fff" stroke="#777" stroke-width="2"/>
<text x="1799.77" y="1070.70" font-size="28.78" font-weight="normal" fill="#111" textLength="198.99" lengthAdjust="spacingAndGlyphs" >Show null option</text>
<circle cx="2022.0" cy="1060.1" r="14.5" fill="none" stroke="#888" stroke-width="2"/>
<text x="2022.0" y="1068.6" font-size="22" fill="#777" text-anchor="middle">?</text>
<rect x="1752" y="1100.2" width="31.6" height="31.6" rx="6" fill="#0a5ce6"/><path d="M1759.5 1116.7 L1765 1122.2 L1776 1110.7" fill="none" stroke="#fff" stroke-width="3.6" stroke-linecap="round" stroke-linejoin="round"/>
<text x="1799.79" y="1126.80" font-size="28.78" font-weight="normal" fill="#111" textLength="213.34" lengthAdjust="spacingAndGlyphs" >Show clear button</text>
<rect x="1752" y="1156.3" width="31.6" height="31.6" rx="6" fill="#0a5ce6"/><path d="M1759.5 1172.8 L1765 1178.3 L1776 1166.8" fill="none" stroke="#fff" stroke-width="3.6" stroke-linecap="round" stroke-linejoin="round"/>
<text x="1799.79" y="1182.90" font-size="28.78" font-weight="normal" fill="#111" textLength="183.64" lengthAdjust="spacingAndGlyphs" >Show All option</text>
<circle cx="2006.7" cy="1172.3" r="14.5" fill="none" stroke="#888" stroke-width="2"/>
<text x="2006.7" y="1180.8" font-size="22" fill="#777" text-anchor="middle">?</text>
<rect x="1752" y="1212.4" width="31.6" height="31.6" rx="6" fill="#0a5ce6"/><path d="M1759.5 1228.9 L1765 1234.4 L1776 1222.9" fill="none" stroke="#fff" stroke-width="3.6" stroke-linecap="round" stroke-linejoin="round"/>
<text x="1799.84" y="1239.00" font-size="28.78" font-weight="normal" fill="#111" textLength="195.83" lengthAdjust="spacingAndGlyphs" >Show search box</text>
<rect x="1753" y="1269.5" width="29.6" height="29.6" rx="5.5" fill="#fff" stroke="#777" stroke-width="2"/>
<text x="1799.80" y="1295.10" font-size="28.78" font-weight="normal" fill="#111" textLength="189.85" lengthAdjust="spacingAndGlyphs" >Show histogram</text>
<rect x="1753" y="1325.6" width="29.6" height="29.6" rx="5.5" fill="#fff" stroke="#777" stroke-width="2"/>
<text x="1798.82" y="1351.20" font-size="28.78" font-weight="normal" fill="#111" textLength="107.89" lengthAdjust="spacingAndGlyphs" >Required</text>
<circle cx="1930.0" cy="1340.6" r="14.5" fill="none" stroke="#888" stroke-width="2"/>
<text x="1930.0" y="1349.1" font-size="22" fill="#777" text-anchor="middle">?</text>
<text x="1751.67" y="1405.50" font-size="27.33" font-weight="normal" fill="#111" textLength="118.09" lengthAdjust="spacingAndGlyphs" >Control ID</text>
<rect x="1753.3" y="1425.5" width="732" height="62" fill="#ffffff" rx="7" stroke="#e2e2e2" stroke-width="2" />
<text x="1768.13" y="1466.20" font-size="28.78" font-weight="normal" fill="#111" textLength="151.54" lengthAdjust="spacingAndGlyphs" >Store-Region</text>
<rect x="306" y="185.6" width="106" height="65" rx="9" fill="#fafafa" stroke="#0a5ce6" stroke-width="2.2" filter="url(#sh2)"/>
<circle cx="326.8" cy="205.7" r="2.2" fill="#777"/><circle cx="334.8" cy="205.7" r="2.2" fill="#777"/><circle cx="378.6" cy="205.7" r="2.4" fill="#222"/>
<circle cx="326.8" cy="217.9" r="2.2" fill="#777"/><circle cx="334.8" cy="217.9" r="2.2" fill="#777"/><circle cx="378.6" cy="217.9" r="2.4" fill="#222"/>
<circle cx="326.8" cy="229.8" r="2.2" fill="#777"/><circle cx="334.8" cy="229.8" r="2.2" fill="#777"/><circle cx="378.6" cy="229.8" r="2.4" fill="#222"/>
<rect x="38.2" y="184" width="220.5" height="30" fill="#0a5ce6" rx="3" />
<text x="46.27" y="207.60" font-size="22.97" font-weight="normal" fill="#ffffff" textLength="205.11" lengthAdjust="spacingAndGlyphs" >Sigma Administrator</text>
<rect x="30.0" y="331.0" width="12" height="12" rx="3" fill="#fff" stroke="#0a5ce6" stroke-width="2"/>
<rect x="410.5" y="331.0" width="12" height="12" rx="3" fill="#fff" stroke="#0a5ce6" stroke-width="2"/>
<rect x="411.5" y="209.5" width="12" height="12" rx="3" fill="#fff" stroke="#0a5ce6" stroke-width="2"/>
<rect x="32.3" y="213.5" width="385.5" height="124.5" rx="2" fill="none" stroke="#f23a48" stroke-width="5.5"/>
<rect x="1736" y="525.3" width="508.9" height="962.6" rx="2" fill="none" stroke="#f23a48" stroke-width="5.5"/>
<circle cx="34" cy="213.75" r="19.6" fill="#f23a48" filter="url(#bsh)"/>
<text x="24.47" y="224.25" font-size="30.52" font-weight="bold" fill="#ffffff" textLength="17.93" lengthAdjust="spacingAndGlyphs" >1</text>
<circle cx="1738.75" cy="526.8" r="19.6" fill="#f23a48" filter="url(#bsh)"/>
<text x="1730.17" y="537.30" font-size="30.52" font-weight="bold" fill="#ffffff" textLength="17.33" lengthAdjust="spacingAndGlyphs" >2</text>
<circle cx="1947.6" cy="1455.3" r="19.6" fill="#f23a48" filter="url(#bsh)"/>
<text x="1939.41" y="1465.80" font-size="30.52" font-weight="bold" fill="#ffffff" textLength="16.78" lengthAdjust="spacingAndGlyphs" >3</text>
</g>
</svg></body></html>
